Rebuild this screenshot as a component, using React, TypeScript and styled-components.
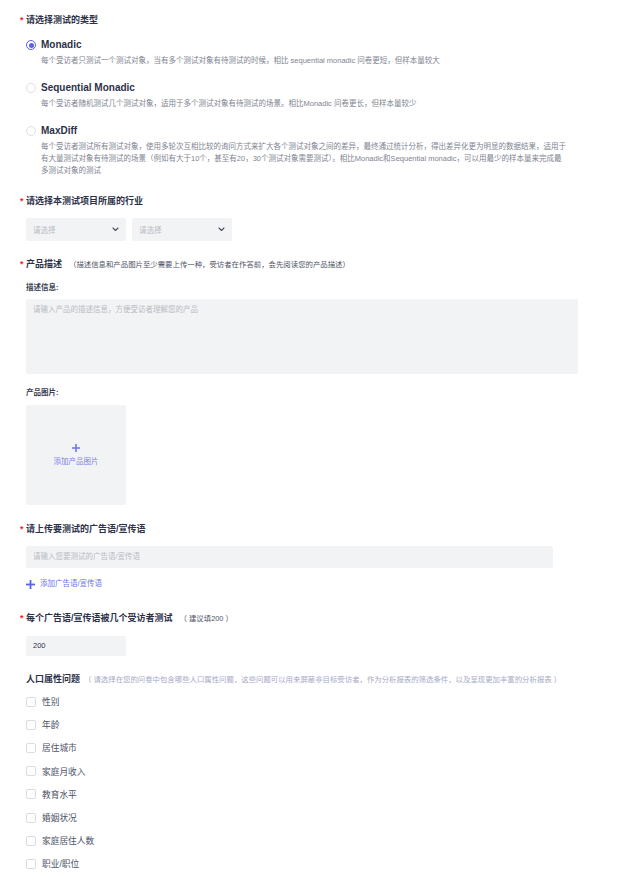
import * as React from 'react';
import styled, { createGlobalStyle } from 'styled-components';

const GlobalStyle = createGlobalStyle`
  html, body {
    margin: 0;
    padding: 0;
    background: #fff;
  }
  body {
    font-family: "Liberation Sans", "Noto Sans CJK SC", sans-serif;
    -webkit-font-smoothing: antialiased;
  }
`;

const Page = styled.div`
  box-sizing: border-box;
  width: 640px;
  padding: 13px 62px 20px 20px;
  display: flex;
  flex-direction: column;
`;

const Title = styled.div<{ $required?: boolean; $mt?: number }>`
  position: relative;
  padding-left: 6px;
  margin-top: ${(p) => p.$mt ?? 0}px;
  font-size: 9px;
  line-height: 14px;
  font-weight: 700;
  color: #2d3148;
  white-space: nowrap;

  &::before {
    content: ${(p) => (p.$required ? "'*'" : "none")};
    position: absolute;
    left: 0;
    top: 0;
    color: #f5222d;
    font-size: 9px;
    line-height: 14px;
  }
`;

const Hint = styled.span<{ $tone: 'dark' | 'light' }>`
  margin-left: ${(p) => (p.$tone === 'light' ? 4 : 7)}px;
  font-size: 7.4px;
  font-weight: 400;
  color: ${(p) => (p.$tone === 'light' ? '#a6a9c6' : '#4f5366')};
`;

const Body = styled.div<{ $mt?: number }>`
  padding-left: 6px;
  margin-top: ${(p) => p.$mt ?? 0}px;
`;

const RadioList = styled(Body)`
  display: flex;
  flex-direction: column;
  gap: 14px;
`;

const Option = styled.div`
  display: grid;
  grid-template-columns: 10px 1fr;
  column-gap: 5px;
  align-items: center;
`;

const Radio = styled.span<{ $checked?: boolean }>`
  box-sizing: border-box;
  width: 10px;
  height: 10px;
  border-radius: 50%;
  border: 1px solid ${(p) => (p.$checked ? '#5a5ff0' : '#dcdfe6')};
  background: #fff;
  display: grid;
  place-items: center;

  &::after {
    content: '';
    width: 5px;
    height: 5px;
    border-radius: 50%;
    background: ${(p) => (p.$checked ? '#5a5ff0' : 'transparent')};
  }
`;

const OptionLabel = styled.div`
  font-size: 10px;
  line-height: 14px;
  font-weight: 700;
  color: #2d3148;
`;

const OptionDesc = styled.div`
  grid-column: 2;
  margin-top: 3px;
  font-size: 7.5px;
  line-height: 12px;
  color: #808491;
  white-space: nowrap;
`;

const SelectRow = styled(Body)`
  display: flex;
  gap: 6px;
`;

const Select = styled.div`
  box-sizing: border-box;
  width: 100px;
  height: 23px;
  padding: 0 7px;
  border-radius: 2px;
  background: #f2f3f5;
  display: flex;
  align-items: center;
  justify-content: space-between;
  font-size: 7.5px;
  color: #b8bbc4;
`;

const SubLabel = styled(Body)`
  font-size: 7.5px;
  line-height: 12px;
  font-weight: 700;
  color: #3a3e52;
`;

const Field = styled.div<{ $w: number; $h: number; $filled?: boolean; $top?: boolean }>`
  box-sizing: border-box;
  width: ${(p) => p.$w}px;
  height: ${(p) => p.$h}px;
  padding: ${(p) => (p.$top ? '5px 7px' : '0 7px')};
  border-radius: 2px;
  background: #f2f3f5;
  display: flex;
  align-items: ${(p) => (p.$top ? 'flex-start' : 'center')};
  font-size: 7.5px;
  line-height: 12px;
  color: ${(p) => (p.$filled ? '#2d3148' : '#b8bbc4')};
`;

const Upload = styled.div`
  width: 100px;
  height: 100px;
  border-radius: 2px;
  background: #f2f3f5;
  display: flex;
  flex-direction: column;
  align-items: center;
  justify-content: center;
  gap: 5px;
  font-size: 7.5px;
  line-height: 10px;
  color: #7d80f0;
`;

const AddLink = styled(Body)`
  display: flex;
  align-items: center;
  gap: 5px;
  font-size: 7.5px;
  line-height: 14px;
  color: #6a6ff2;
`;

const CheckList = styled(Body)`
  display: flex;
  flex-direction: column;
`;

const CheckRow = styled.label`
  height: 23.2px;
  display: flex;
  align-items: center;
  gap: 6px;
  font-size: 8.7px;
  color: #4d5266;
`;

const Box = styled.span`
  box-sizing: border-box;
  width: 10px;
  height: 10px;
  border: 1px solid #d9dce3;
  border-radius: 2px;
  background: #fff;
`;

const Chevron = () => (
  <svg width="7" height="5" viewBox="0 0 7 5" fill="none">
    <polyline points="1,1 3.5,3.5 6,1" stroke="#4a4e5e" strokeWidth="1.1" strokeLinecap="round" strokeLinejoin="round" />
  </svg>
);

const Plus = ({ size, stroke, color }: { size: number; stroke: number; color: string }) => (
  <svg width={size} height={size} viewBox={`0 0 ${size} ${size}`} fill="none">
    <line x1={size / 2} y1="0" x2={size / 2} y2={size} stroke={color} strokeWidth={stroke} />
    <line x1="0" y1={size / 2} x2={size} y2={size / 2} stroke={color} strokeWidth={stroke} />
  </svg>
);

const options = [
  {
    label: 'Monadic',
    checked: true,
    desc: ['每个受访者只测试一个测试对象，当有多个测试对象有待测试的时候，相比 sequential monadic 问卷更短，但样本量较大'],
  },
  {
    label: 'Sequential Monadic',
    desc: ['每个受访者随机测试几个测试对象，适用于多个测试对象有待测试的场景。相比Monadic 问卷更长，但样本量较少'],
  },
  {
    label: 'MaxDiff',
    desc: [
      '每个受访者测试所有测试对象，使用多轮次互相比较的询问方式来扩大各个测试对象之间的差异，最终通过统计分析，得出差异化更为明显的数据结果，适用于',
      '有大量测试对象有待测试的场景（例如有大于10个，甚至有20，30个测试对象需要测试）。相比Monadic和Sequential monadic，可以用最少的样本量来完成最',
      '多测试对象的测试',
    ],
  },
];

const demographics = ['性别', '年龄', '居住城市', '家庭月收入', '教育水平', '婚姻状况', '家庭居住人数', '职业/职位'];

export default function App() {
  return (
    <>
      <GlobalStyle />
      <Page>
        <Title $required>请选择测试的类型</Title>
        <RadioList $mt={11}>
          {options.map((o) => (
            <Option key={o.label}>
              <Radio $checked={o.checked} />
              <OptionLabel>{o.label}</OptionLabel>
              <OptionDesc>
                {o.desc.map((line, i) => (
                  <div key={i}>{line}</div>
                ))}
              </OptionDesc>
            </Option>
          ))}
        </RadioList>

        <Title $required $mt={17}>请选择本测试项目所属的行业</Title>
        <SelectRow $mt={10}>
          <Select>
            请选择
            <Chevron />
          </Select>
          <Select>
            请选择
            <Chevron />
          </Select>
        </SelectRow>

        <Title $required $mt={16}>
          产品描述
          <Hint $tone="dark">（描述信息和产品图片至少需要上传一种，受访者在作答前，会先阅读您的产品描述）</Hint>
        </Title>
        <SubLabel $mt={10}>描述信息:</SubLabel>
        <Body $mt={5}>
          <Field $w={552} $h={75} $top>请输入产品的描述信息，方便受访者理解您的产品</Field>
        </Body>
        <SubLabel $mt={13}>产品图片:</SubLabel>
        <Body $mt={6}>
          <Upload>
            <Plus size={8} stroke={1.6} color="#7075f5" />
            添加产品图片
          </Upload>
        </Body>

        <Title $required $mt={17}>请上传要测试的广告语/宣传语</Title>
        <Body $mt={10}>
          <Field $w={527} $h={22}>请输入您要测试的广告语/宣传语</Field>
        </Body>
        <AddLink $mt={9}>
          <Plus size={9} stroke={1.8} color="#5b60f0" />
          添加广告语/宣传语
        </AddLink>

        <Title $required $mt={20}>
          每个广告语/宣传语被几个受访者测试
          <Hint $tone="dark">（ 建议填200 ）</Hint>
        </Title>
        <Body $mt={10}>
          <Field $w={100} $h={20} $filled>200</Field>
        </Body>

        <Title $mt={16}>
          人口属性问题
          <Hint $tone="light">（ 请选择在您的问卷中包含哪些人口属性问题，这些问题可以用来屏蔽非目标受访者，作为分析报表的筛选条件，以及呈现更加丰富的分析报表 ）</Hint>
        </Title>
        <CheckList $mt={3}>
          {demographics.map((d) => (
            <CheckRow key={d}>
              <Box />
              {d}
            </CheckRow>
          ))}
        </CheckList>
      </Page>
    </>
  );
}
